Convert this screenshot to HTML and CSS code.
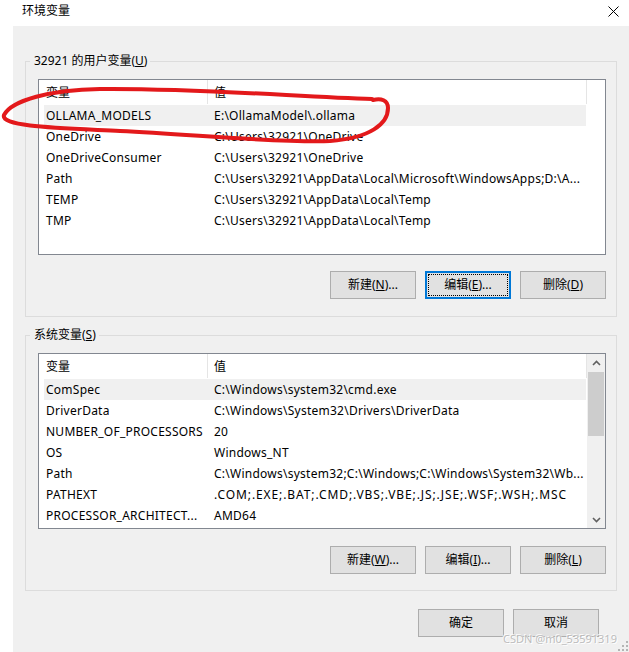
FILE: index.html
```html
<!DOCTYPE html>
<html lang="zh-CN">
<head>
<meta charset="utf-8">
<title>环境变量</title>
<link rel="stylesheet" href="styles.css">
</head>
<body>
<div class="window">
  <div class="titlebar">
    <span class="title">环境变量</span>
    <svg class="close" width="11" height="11" viewBox="0 0 11 11"><path d="M0.5 0.5L10.5 10.5M10.5 0.5L0.5 10.5" stroke="#000" stroke-width="1" fill="none"/></svg>
  </div>
  <div class="client">
    <fieldset class="group g1">
      <legend>32921 的用户变量(<u>U</u>)</legend>
      <div class="list">
        <div class="list-main">
          <div class="header"><div class="hcell h1">变量</div><div class="hcell h2">值</div></div>
          <div class="rows">
            <div class="row sel"><span class="c1">OLLAMA_MODELS</span><span class="c2">E:\OllamaModel\.ollama</span></div>
            <div class="row"><span class="c1">OneDrive</span><span class="c2">C:\Users\32921\OneDrive</span></div>
            <div class="row"><span class="c1">OneDriveConsumer</span><span class="c2">C:\Users\32921\OneDrive</span></div>
            <div class="row"><span class="c1">Path</span><span class="c2">C:\Users\32921\AppData\Local\Microsoft\WindowsApps;D:\A...</span></div>
            <div class="row"><span class="c1">TEMP</span><span class="c2">C:\Users\32921\AppData\Local\Temp</span></div>
            <div class="row"><span class="c1">TMP</span><span class="c2">C:\Users\32921\AppData\Local\Temp</span></div>
          </div>
        </div>
      </div>
      <div class="buttons">
        <button class="btn">新建(<u>N</u>)...</button>
        <button class="btn focus">编辑(<u>E</u>)...</button>
        <button class="btn">删除(<u>D</u>)</button>
      </div>
    </fieldset>

    <fieldset class="group g2">
      <legend>系统变量(<u>S</u>)</legend>
      <div class="list">
        <div class="list-main">
          <div class="header"><div class="hcell h1">变量</div><div class="hcell h2">值</div></div>
          <div class="rows">
            <div class="row sel"><span class="c1">ComSpec</span><span class="c2">C:\Windows\system32\cmd.exe</span></div>
            <div class="row"><span class="c1">DriverData</span><span class="c2">C:\Windows\System32\Drivers\DriverData</span></div>
            <div class="row"><span class="c1">NUMBER_OF_PROCESSORS</span><span class="c2">20</span></div>
            <div class="row"><span class="c1">OS</span><span class="c2">Windows_NT</span></div>
            <div class="row"><span class="c1">Path</span><span class="c2">C:\Windows\system32;C:\Windows;C:\Windows\System32\Wb...</span></div>
            <div class="row"><span class="c1">PATHEXT</span><span class="c2 wide">.COM;.EXE;.BAT;.CMD;.VBS;.VBE;.JS;.JSE;.WSF;.WSH;.MSC</span></div>
            <div class="row"><span class="c1">PROCESSOR_ARCHITECT...</span><span class="c2">AMD64</span></div>
          </div>
        </div>
        <div class="vscroll">
          <div class="arrow"><svg width="9" height="6" viewBox="0 0 9 6"><path d="M1 5L4.5 1.5L8 5" stroke="#606060" stroke-width="1.6" fill="none"/></svg></div>
          <div class="thumb"></div>
          <div class="track"></div>
          <div class="arrow"><svg width="9" height="6" viewBox="0 0 9 6"><path d="M1 1L4.5 4.5L8 1" stroke="#606060" stroke-width="1.6" fill="none"/></svg></div>
        </div>
      </div>
      <div class="buttons">
        <button class="btn">新建(<u>W</u>)...</button>
        <button class="btn">编辑(<u>I</u>)...</button>
        <button class="btn">删除(<u>L</u>)</button>
      </div>
    </fieldset>

    <div class="dialog-buttons">
      <button class="btn">确定</button>
      <button class="btn">取消</button>
    </div>
  </div>

  <svg class="annot" width="629" height="652" viewBox="0 0 629 652">
    <path d="M372 99 C300 97 200 88 100 89 C50 90 12 100 4 115 C0 127 60 128 120 131 C200 135 280 143 330 141 C370 138 388 124 388 108 C388 100 381 98 373 100" stroke="#e3191b" stroke-width="4" fill="none" stroke-linecap="round" stroke-linejoin="round"/>
  </svg>
  <div class="watermark">CSDN @m0_53591319</div>
  <svg class="grip" width="11" height="11" viewBox="0 0 11 11">
    <rect x="8" y="0" width="2" height="2" fill="#b4b4b4"/>
    <rect x="4" y="4" width="2" height="2" fill="#b4b4b4"/>
    <rect x="8" y="4" width="2" height="2" fill="#b4b4b4"/>
    <rect x="0" y="8" width="2" height="2" fill="#b4b4b4"/>
    <rect x="4" y="8" width="2" height="2" fill="#b4b4b4"/>
    <rect x="8" y="8" width="2" height="2" fill="#b4b4b4"/>
  </svg>
</div>
</body>
</html>
```

FILE: styles.css
```css
* { box-sizing: border-box; }
html, body { margin: 0; padding: 0; }
body {
  background: #fff;
  font-family: "Noto Sans", "Noto Sans CJK SC", sans-serif;
  font-size: 12px;
  color: #000;
}
.window {
  position: relative;
  width: 629px;
  height: 652px;
  overflow: hidden;
}
.titlebar {
  height: 26px;
  display: flex;
  align-items: center;
  justify-content: space-between;
  padding: 0 10px 4px 22px;
}
.title { line-height: 16px; }
.close { display: block; }

.client {
  margin-left: 13px;
  height: 626px;
  background: #f0f0f0;
  padding: 27px 12px 0 12px;
  display: flex;
  flex-direction: column;
}
.group {
  margin: 0;
  min-width: 0;
  border: 1px solid #dcdcdc;
  padding: 10px 10px 17px 12px;
}
.group legend {
  padding: 0 3px 0 4px;
  margin-left: -8px;
  line-height: 16px;
}
.g2 { margin-top: 10px; padding-bottom: 16px; }
.g2 .buttons { margin-top: 17px; }

.list {
  width: 568px;
  height: 176px;
  border: 1px solid #828790;
  background: #fff;
  display: flex;
}
.list-main {
  width: 548px;
  flex: none;
  display: flex;
  flex-direction: column;
}
.header {
  height: 25px;
  display: flex;
}
.hcell {
  height: 24px;
  display: flex;
  align-items: center;
  border-right: 1px solid #e5e5e5;
  white-space: nowrap;
}
.h1 { width: 169px; padding-left: 7px; }
.h2 { width: 379px; padding-left: 6px; }
.rows { padding-left: 5px; }
.row {
  width: 542px;
  height: 21px;
  display: flex;
  align-items: center;
  white-space: nowrap;
  overflow: hidden;
  letter-spacing: 0.25px;
}
.row.sel { background: #f0f0f0; }
.c1 { width: 163px; flex: none; padding-left: 2px; overflow: hidden; }
.c2 { flex: 1; padding-left: 7px; overflow: hidden; }
.c2.wide { letter-spacing: 0.9px; }

.vscroll {
  flex: 1;
  background: #f0f0f0;
  display: flex;
  flex-direction: column;
}
.arrow {
  height: 17px;
  display: flex;
  align-items: center;
  justify-content: center;
}
.arrow svg { display: block; }
.thumb {
  height: 64px;
  margin: 1px 1px 0 1px;
  background: #cdcdcd;
}
.track { flex: 1; }

.buttons {
  display: flex;
  justify-content: flex-end;
  gap: 9px;
  margin-top: 16px;
  width: 568px;
}
.btn {
  width: 86px;
  height: 28px;
  padding: 0;
  background: #e1e1e1;
  border: 1px solid #adadad;
  font-family: inherit;
  font-size: 12px;
  color: #000;
  line-height: 16px;
}
.btn.focus {
  border: 2px solid #0078d7;
  outline: 1px dotted #000;
  outline-offset: -4px;
}
.dialog-buttons {
  display: flex;
  justify-content: flex-end;
  gap: 9px;
  margin-top: 18px;
  padding-right: 18px;
}

.annot {
  position: absolute;
  left: 0;
  top: 0;
  pointer-events: none;
}
.watermark {
  position: absolute;
  left: 503px;
  top: 632px;
  font-size: 11px;
  line-height: 14px;
  color: #bdbdbd;
  text-shadow: 1px 1px 0 #fff, -1px -1px 0 #fafafa;
  white-space: nowrap;
}
.grip {
  position: absolute;
  left: 618px;
  top: 641px;
}
```
